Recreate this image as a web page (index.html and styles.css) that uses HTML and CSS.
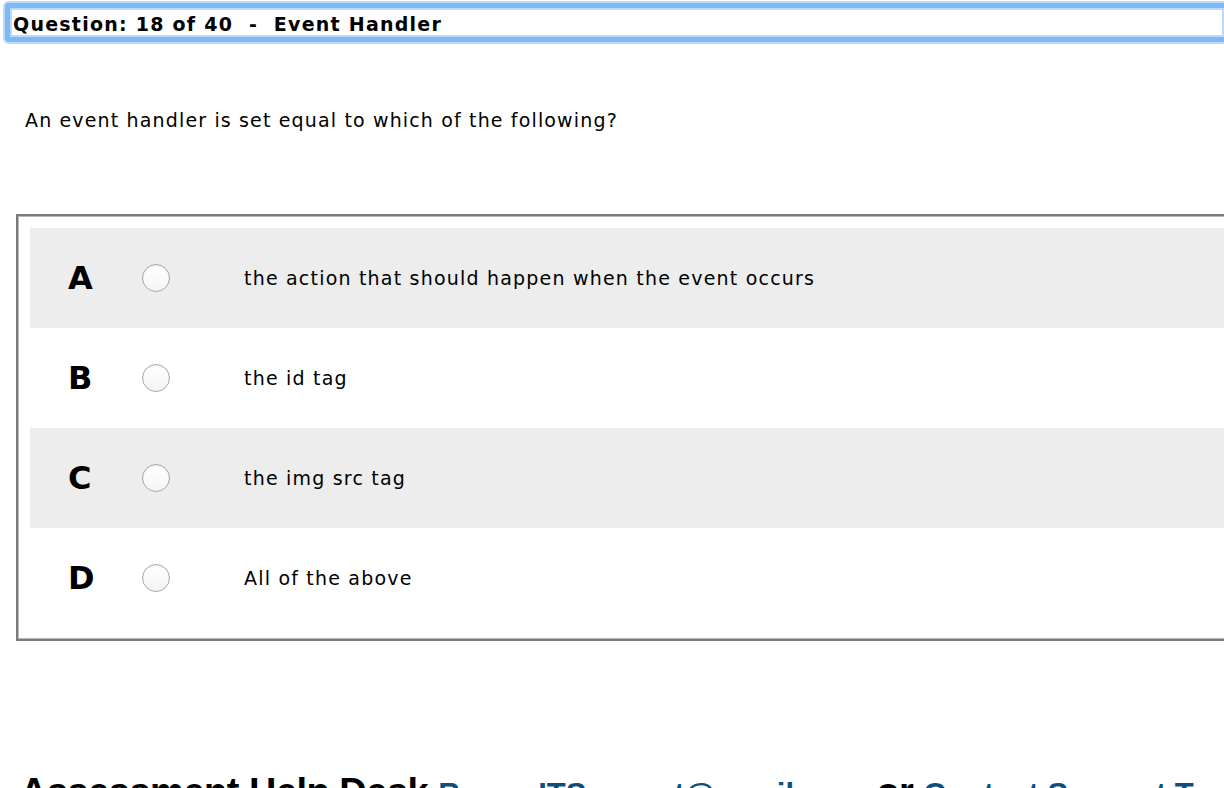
FILE: index.html
```html
<!DOCTYPE html>
<html>
<head>
<meta charset="utf-8">
<link rel="stylesheet" href="styles.css">
</head>
<body>
<div class="qhead">Question: 18 of 40&nbsp; - &nbsp;Event Handler</div>
<p class="qtext">An event handler is set equal to which of the following?</p>
<div class="answers">
  <div class="row shaded"><span class="letter">A</span><span class="radio"></span><span class="atext">the action that should happen when the event occurs</span></div>
  <div class="row"><span class="letter">B</span><span class="radio"></span><span class="atext">the id tag</span></div>
  <div class="row shaded"><span class="letter">C</span><span class="radio"></span><span class="atext">the img src tag</span></div>
  <div class="row"><span class="letter">D</span><span class="radio"></span><span class="atext">All of the above</span></div>
</div>
<div class="help"><span class="hd">Assessment Help Desk</span><a class="lnk">Base eITSupport@email.com</a><span class="or">or</span><a class="lnk">Contact Support Team</a></div>
</body>
</html>
```
FILE: styles.css
```css
html, body {
  margin: 0;
  padding: 0;
  background: #ffffff;
  overflow: hidden;
}
body {
  font-family: "DejaVu Sans", Verdana, sans-serif;
  color: #000;
  width: 1224px;
  height: 788px;
}
.qhead {
  margin: 3px 0 0 5px;
  border: 5px solid #7db9f7;
  border-right: none;
  border-radius: 4px 0 0 4px;
  box-shadow: 0 0 0 2px #bcd9f8, inset 0 0 0 2px #bcd9f8;
  padding: 6px 0 3px 3px;
  font-weight: bold;
  font-size: 19px;
  line-height: 20px;
  letter-spacing: 1.25px;
  white-space: nowrap;
}
.qtext {
  margin: 67px 0 0 25px;
  font-size: 19px;
  line-height: 22px;
  letter-spacing: 1.15px;
}
.answers {
  margin: 83px 0 0 16px;
  border: 2px solid #7a7a7a;
  border-right: none;
  box-shadow: inset 1px 1px 0 #b8b8b8, inset 0 -1px 0 #b8b8b8;
  padding: 12px 0 11px 12px;
}
.row {
  height: 100px;
  display: flex;
  align-items: center;
}
.row.shaded {
  background: #ededed;
}
.letter {
  width: 38px;
  margin-left: 38px;
  font-weight: bold;
  font-size: 32px;
}
.radio {
  width: 26px;
  height: 26px;
  border-radius: 50%;
  border: 1px solid #a8a8a8;
  background: linear-gradient(#ffffff, #f4f4f4);
  box-shadow: inset 0 1px 1px rgba(0,0,0,0.07);
  margin-left: 36px;
}
.atext {
  margin-left: 74px;
  font-size: 19px;
  letter-spacing: 1.2px;
}
.help {
  margin: 132px 0 0 20px;
  display: flex;
  align-items: baseline;
  gap: 10px;
  white-space: nowrap;
  font-family: "Liberation Sans", Arial, sans-serif;
  font-weight: bold;
}
.hd, .or {
  font-size: 38px;
  line-height: 38px;
  letter-spacing: -0.5px;
  color: #000;
}
.lnk {
  font-size: 31px;
  line-height: 31px;
  color: #0f4f7d;
}
```
